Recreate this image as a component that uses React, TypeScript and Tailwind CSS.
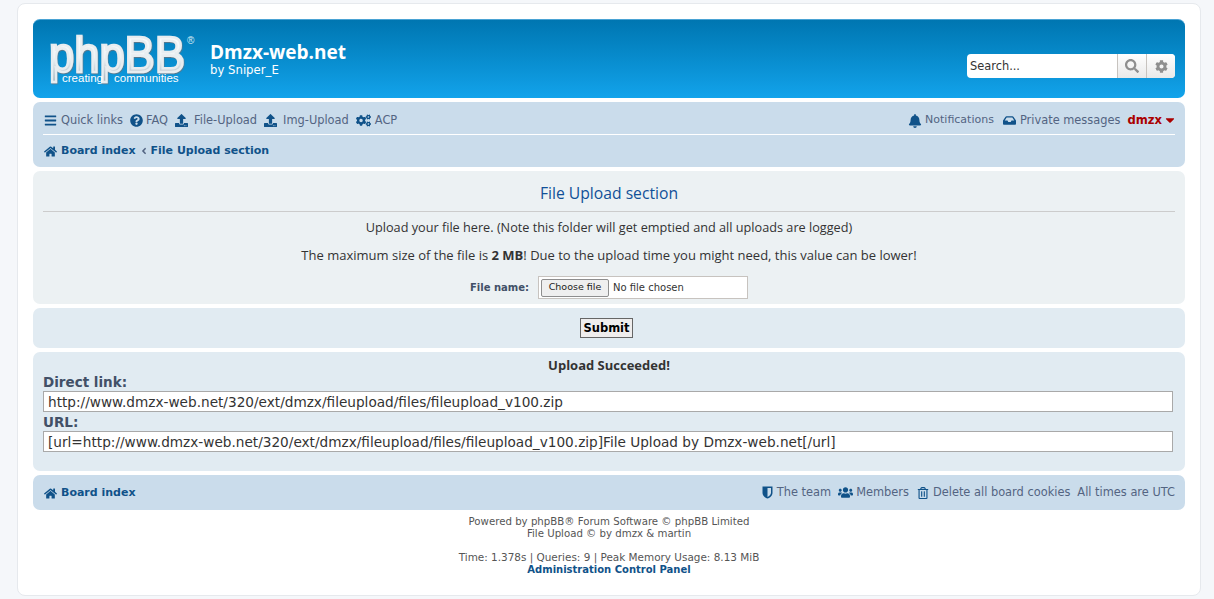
import { FaAngleLeft, FaBars, FaBell, FaCaretDown, FaCog, FaCogs, FaHome, FaInbox, FaQuestionCircle, FaRegTrashAlt, FaSearch, FaUpload, FaUsers } from 'react-icons/fa';

const font = "font-['DejaVu_Sans',sans-serif]";

function PhpbbLogo() {
    return (
        <svg width="150" height="66" viewBox="0 0 150 66" className="block shrink-0">
            <defs>
                <linearGradient id="logoFill" x1="0" y1="0" x2="0" y2="1">
                    <stop offset="0" stopColor="#ffffff" />
                    <stop offset="0.55" stopColor="#eef3f6" />
                    <stop offset="1" stopColor="#9fb0bb" />
                </linearGradient>
                <filter id="logoShade" x="-5%" y="-5%" width="110%" height="115%">
                    <feDropShadow dx="0.6" dy="1" stdDeviation="0.5" floodColor="#5f7787" floodOpacity="0.9" />
                </filter>
            </defs>
            <text x="1" y="45" textLength="136" lengthAdjust="spacingAndGlyphs" fontFamily="'Liberation Sans', sans-serif" fontSize="50" fill="url(#logoFill)" stroke="#e8edf0" strokeWidth="2.6" filter="url(#logoShade)">phpBB</text>
            <text x="139" y="17" fontFamily="'Liberation Sans', sans-serif" fontSize="10" fill="#dcebf5">®</text>
            <text x="14" y="55" textLength="41" fontFamily="'Liberation Sans', sans-serif" fontSize="11.5" fill="#ffffff">creating</text>
            <text x="66" y="55" fontFamily="'Liberation Sans', sans-serif" fontSize="11.5" fill="#ffffff">communities</text>
        </svg>
    );
}

function ShieldIcon() {
    return (
        <svg width="11" height="13" viewBox="0 0 11 13" className="block">
            <path fill="currentColor" d="M0.5 0.5h10v6.2c0 3-2.6 4.9-5 5.9-2.4-1-5-2.9-5-5.9z" />
            <path fill="#cadceb" d="M5.5 2h3.5v4.7c0 2-1.8 3.3-3.5 4.2z" />
        </svg>
    );
}

function NavLink({ icon, label, className = '', labelClass = '' }: { icon: React.ReactNode; label: string; className?: string; labelClass?: string }) {
    return (
        <span className={`flex items-center ${className}`}>
            <span className="flex justify-center text-[#105289]">{icon}</span>
            <span className={`text-[#536482] ${labelClass}`}>{label}</span>
        </span>
    );
}

export default function App() {
    return (
        <div className={`h-[599px] overflow-hidden bg-[#f5f7fa] pt-[3px] text-[11.4px] text-[#536482] ${font}`}>
            <div className="ml-[17px] mr-[13px] h-[593px] rounded-[8px] border border-[#e6e9ed] bg-white p-[15px]">
                {/* Header */}
                <div className="mb-[4px] flex h-[79px] rounded-[7px] border-t border-[#4aa3d4] bg-gradient-to-b from-[#0076b1] to-[#12a3eb] pl-[15px] pr-[10px] pt-[7px]">
                    <PhpbbLogo />
                    <div className="ml-[12px] mt-[13px] text-white">
                        <div className="font-['Open_Sans',sans-serif] text-[19px] font-bold leading-[24px]">Dmzx-web.net</div>
                        <div className="text-[11.7px] leading-[13px]">by Sniper_E</div>
                    </div>
                    <div className="ml-auto mt-[27px] flex h-[24px] w-[208px] overflow-hidden rounded-[4px] bg-white">
                        <span className="flex-1 pl-[3px] text-[11.4px] leading-[24px] text-[#333]">Search...</span>
                        <span className="flex w-[29px] items-center justify-center border-l border-[#c7c3bf] bg-gradient-to-b from-white to-[#e9e9e9] text-[14px] text-[#8f8f8f]"><FaSearch /></span>
                        <span className="flex w-[29px] items-center justify-center border-l border-[#c7c3bf] bg-gradient-to-b from-white to-[#e9e9e9] text-[13px] text-[#8f8f8f]"><FaCog /></span>
                    </div>
                </div>

                {/* Navbar */}
                <div className="mb-[4px] h-[65px] rounded-[7px] bg-[#cadceb] px-[10px] pt-[3px]">
                    <div className="flex h-[30px] items-center gap-[7px] border-b border-white pl-[1px] pt-[2px]">
                        <NavLink icon={<FaBars className="text-[13px]" />} label="Quick links" className="gap-[4px]" />
                        <NavLink icon={<FaQuestionCircle className="text-[13px]" />} label="FAQ" className="gap-[3px]" />
                        <NavLink icon={<FaUpload className="text-[13px]" />} label="File-Upload" className="gap-[6px]" />
                        <NavLink icon={<FaUpload className="text-[13px]" />} label="Img-Upload" className="gap-[6px]" />
                        <NavLink icon={<FaCogs className="text-[15px]" />} label="ACP" className="gap-[4px]" />
                        <NavLink icon={<FaBell className="text-[14px]" />} label="Notifications" className="ml-auto gap-[3px]" labelClass="text-[11px]" />
                        <NavLink icon={<FaInbox className="text-[13px]" />} label="Private messages" className="ml-[2px] gap-[4px]" />
                        <span className="-mr-[2px] flex items-center gap-[1px] text-[11.6px] font-bold text-[#aa0000]">dmzx <FaCaretDown className="text-[14px]" /></span>
                    </div>
                    <div className="flex h-[31px] items-center gap-[4px] pl-[1px] pt-[1px] font-bold text-[#105289]">
                        <FaHome className="text-[13px]" />
                        <span className="text-[11px]">Board index</span>
                        <FaAngleLeft className="-ml-[1px] text-[10px] text-[#536482]" />
                        <span className="-ml-[2px] text-[11px]">File Upload section</span>
                    </div>
                </div>

                {/* Upload form */}
                <div className="mb-[4px] h-[133px] rounded-[7px] bg-[#ecf1f3] px-[10px] text-center text-[#333]">
                    <h2 className="h-[41px] border-b border-[#cccccc] pt-[12px] font-['Open_Sans',sans-serif] text-[15.7px] leading-[20px] text-[#115098]">File Upload section</h2>
                    <p className="mt-[6px] font-['Open_Sans',sans-serif] text-[12.7px] leading-[18px]">Upload your file here. (Note this folder will get emptied and all uploads are logged)</p>
                    <p className="mt-[10px] font-['Open_Sans',sans-serif] text-[13px] leading-[18px]">The maximum size of the file is <b>2 MB</b>! Due to the upload time you might need, this value can be lower!</p>
                    <div className="mt-[12px] flex h-[23px] items-center">
                        <label className="w-[486px] text-right text-[10px] font-bold text-[#425067]">File name:</label>
                        <div className="ml-[9px] flex h-[23px] w-[210px] items-center border border-[#c7c3bf] bg-white pl-[2px] text-[10px] text-[#333]">
                            <button className="h-[18px] w-[68px] rounded-[2px] border border-[#8e8e8e] bg-[#efefef] text-[9.5px] text-[#222]">Choose file</button>
                            <span className="ml-[4px]">No file chosen</span>
                        </div>
                    </div>
                </div>

                <div className="mb-[4px] flex h-[40px] items-center justify-center rounded-[7px] bg-[#e1ebf2]">
                    <button className="mr-[5px] h-[20px] w-[53px] border border-[#666666] bg-[#efeded] pt-[1px] text-[11.5px] font-bold text-black">Submit</button>
                </div>

                {/* Upload result */}
                <div className="mb-[4px] h-[119px] rounded-[7px] bg-[#e1ebf2] px-[10px] pt-[5px]">
                    <div className="text-center font-['Open_Sans',sans-serif] text-[13px] font-bold leading-[16px] text-[#333]">Upload Succeeded!</div>
                    <div className="text-[13.5px] font-bold leading-[18px] text-[#425067]">Direct link:</div>
                    <input readOnly value="http://www.dmzx-web.net/320/ext/dmzx/fileupload/files/fileupload_v100.zip" className="block h-[21px] w-[1130px] border border-[#a9a9a9] bg-white px-[4px] text-[13.65px] text-[#333]" />
                    <div className="h-[19px] text-[13.5px] font-bold leading-[21px] text-[#425067]">URL:</div>
                    <input readOnly value="[url=http://www.dmzx-web.net/320/ext/dmzx/fileupload/files/fileupload_v100.zip]File Upload by Dmzx-web.net[/url]" className="block h-[21px] w-[1130px] border border-[#a9a9a9] bg-white px-[4px] text-[13.65px] text-[#333]" />
                </div>

                {/* Footer navbar */}
                <div className="flex h-[35px] items-center rounded-[7px] bg-[#cadceb] pl-[11px] pr-[10px] pt-[1px]">
                    <FaHome className="text-[13px] text-[#105289]" />
                    <span className="ml-[4px] text-[11px] font-bold text-[#105289]">Board index</span>
                    <NavLink icon={<ShieldIcon />} label="The team" className="ml-auto gap-[4px]" />
                    <NavLink icon={<FaUsers className="text-[15px]" />} label="Members" className="ml-[7px] gap-[3px]" />
                    <NavLink icon={<FaRegTrashAlt className="text-[12px]" />} label="Delete all board cookies" className="ml-[8px] gap-[4px]" />
                    <span className="ml-[7px]">All times are UTC</span>
                </div>

                <div className="mt-[6px] text-center text-[10.2px] leading-[12px] text-[#555555]">
                    <p>Powered by phpBB® Forum Software © phpBB Limited</p>
                    <p>File Upload © by dmzx &amp; martin</p>
                    <p className="mt-[11px] text-[10.45px]">Time: 1.378s | Queries: 9 | Peak Memory Usage: 8.13 MiB</p>
                    <p className="text-[10px] font-bold leading-[13px] text-[#105289]">Administration Control Panel</p>
                </div>
            </div>
        </div>
    );
}
